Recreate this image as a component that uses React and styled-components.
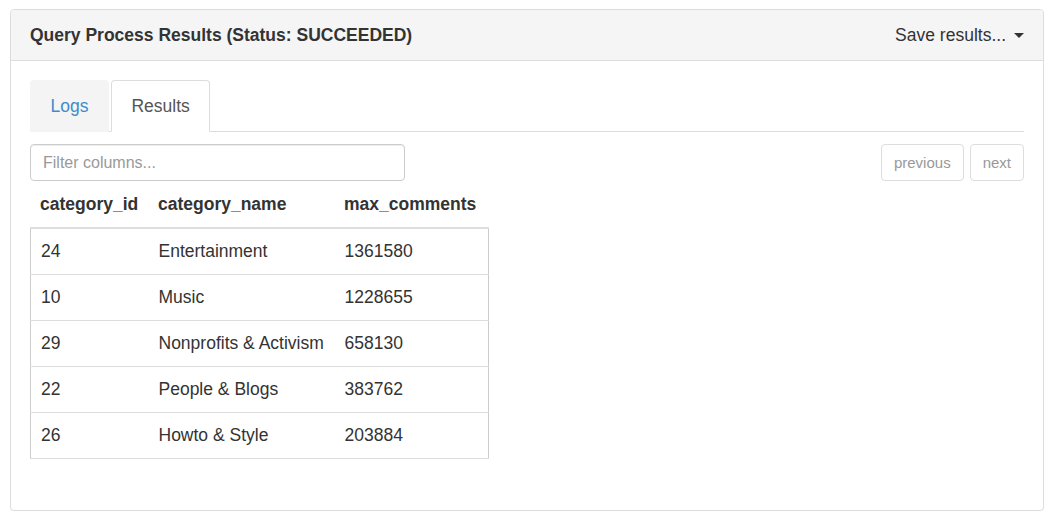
import React from 'react';
import styled, { createGlobalStyle } from 'styled-components';

const GlobalStyle = createGlobalStyle`
  body {
    margin: 0;
    background: #fff;
    font-family: "Liberation Sans", Arial, Helvetica, sans-serif;
    color: #333;
  }
`;

const Page = styled.div`
  padding: 9px 14px 0 10px;
`;

const Panel = styled.div`
  border: 1px solid #ddd;
  border-radius: 4px;
  box-shadow: 0 1px 1px rgba(0, 0, 0, 0.05);
  overflow: hidden;
`;

const Heading = styled.div`
  display: flex;
  align-items: center;
  justify-content: space-between;
  height: 50px;
  padding: 0 19px;
  background: #f5f5f5;
  border-bottom: 1px solid #ddd;
`;

const Title = styled.h3`
  margin: 0;
  font-size: 17.5px;
  font-weight: bold;
  color: #333;
`;

const SaveMenu = styled.div`
  display: flex;
  align-items: center;
  gap: 8px;
  font-size: 17.5px;
  color: #333;
`;

const Caret = styled.span`
  display: inline-block;
  width: 0;
  height: 0;
  border-top: 5px solid #333;
  border-left: 5px solid transparent;
  border-right: 5px solid transparent;
`;

const Body = styled.div`
  padding: 19px 19px 19px;
`;

const TabList = styled.ul`
  display: flex;
  margin: 0;
  padding: 0;
  list-style: none;
  border-bottom: 1px solid #ddd;
`;

const Tab = styled.li`
  margin-right: 2px;
  margin-bottom: -1px;
  height: 52px;
  box-sizing: border-box;
  display: flex;
  align-items: center;
  padding: 1px 19.5px 0;
  font-size: 17.5px;
  border: 1px solid ${p => (p.$active ? '#ddd' : 'transparent')};
  border-bottom-color: transparent;
  border-radius: 4px 4px 0 0;
  background: ${p => (p.$active ? '#fff' : '#f4f4f4')};
  color: ${p => (p.$active ? '#555' : '#428bca')};
`;

const Toolbar = styled.div`
  display: flex;
  align-items: center;
  justify-content: space-between;
  margin-top: 12px;
`;

const FilterInput = styled.input`
  box-sizing: border-box;
  width: 375px;
  height: 37px;
  padding: 0 12px;
  border: 1px solid #ccc;
  border-radius: 4px;
  font-family: inherit;
  font-size: 16px;
  color: #555;
  box-shadow: inset 0 1px 1px rgba(0, 0, 0, 0.075);
  &::placeholder {
    color: #999;
  }
`;

const Pager = styled.div`
  display: flex;
  gap: 6px;
`;

const PageButton = styled.button`
  box-sizing: border-box;
  height: 37px;
  padding: 0 12px;
  background: #fff;
  border: 1px solid #ddd;
  border-radius: 4px;
  font-family: inherit;
  font-size: 15px;
  color: #999;
`;

const Grid = styled.table`
  width: 458px;
  table-layout: fixed;
  border-collapse: collapse;
  font-size: 17.5px;
  color: #333;
`;

const HeadCell = styled.th`
  height: 46px;
  padding: 0 0 0 10px;
  text-align: left;
  font-weight: bold;
`;

const BodyGrid = styled(Grid)`
  border: 1px solid #ccc;
  border-top: 2px solid #ddd;
  margin-bottom: 32px;
`;

const Row = styled.tr`
  border-bottom: 1px solid #ddd;
`;

const Cell = styled.td`
  height: 45px;
  padding: 0 0 0 10px;
`;

const columns = ['category_id', 'category_name', 'max_comments'];
const widths = [118, 186, 154];

const rows = [
  ['24', 'Entertainment', '1361580'],
  ['10', 'Music', '1228655'],
  ['29', 'Nonprofits & Activism', '658130'],
  ['22', 'People & Blogs', '383762'],
  ['26', 'Howto & Style', '203884'],
];

const Cols = () => (
  <colgroup>
    {widths.map((w, i) => (
      <col key={i} style={{ width: w }} />
    ))}
  </colgroup>
);

export default function App() {
  return (
    <Page>
      <GlobalStyle />
      <Panel>
        <Heading>
          <Title>Query Process Results (Status: SUCCEEDED)</Title>
          <SaveMenu>
            Save results...
            <Caret />
          </SaveMenu>
        </Heading>
        <Body>
          <TabList>
            <Tab>Logs</Tab>
            <Tab $active>Results</Tab>
          </TabList>
          <Toolbar>
            <FilterInput placeholder="Filter columns..." />
            <Pager>
              <PageButton>previous</PageButton>
              <PageButton>next</PageButton>
            </Pager>
          </Toolbar>
          <Grid>
            <Cols />
            <thead>
              <tr>
                {columns.map(c => (
                  <HeadCell key={c}>{c}</HeadCell>
                ))}
              </tr>
            </thead>
          </Grid>
          <BodyGrid>
            <Cols />
            <tbody>
              {rows.map(r => (
                <Row key={r[0]}>
                  {r.map((v, i) => (
                    <Cell key={i}>{v}</Cell>
                  ))}
                </Row>
              ))}
            </tbody>
          </BodyGrid>
        </Body>
      </Panel>
    </Page>
  );
}
